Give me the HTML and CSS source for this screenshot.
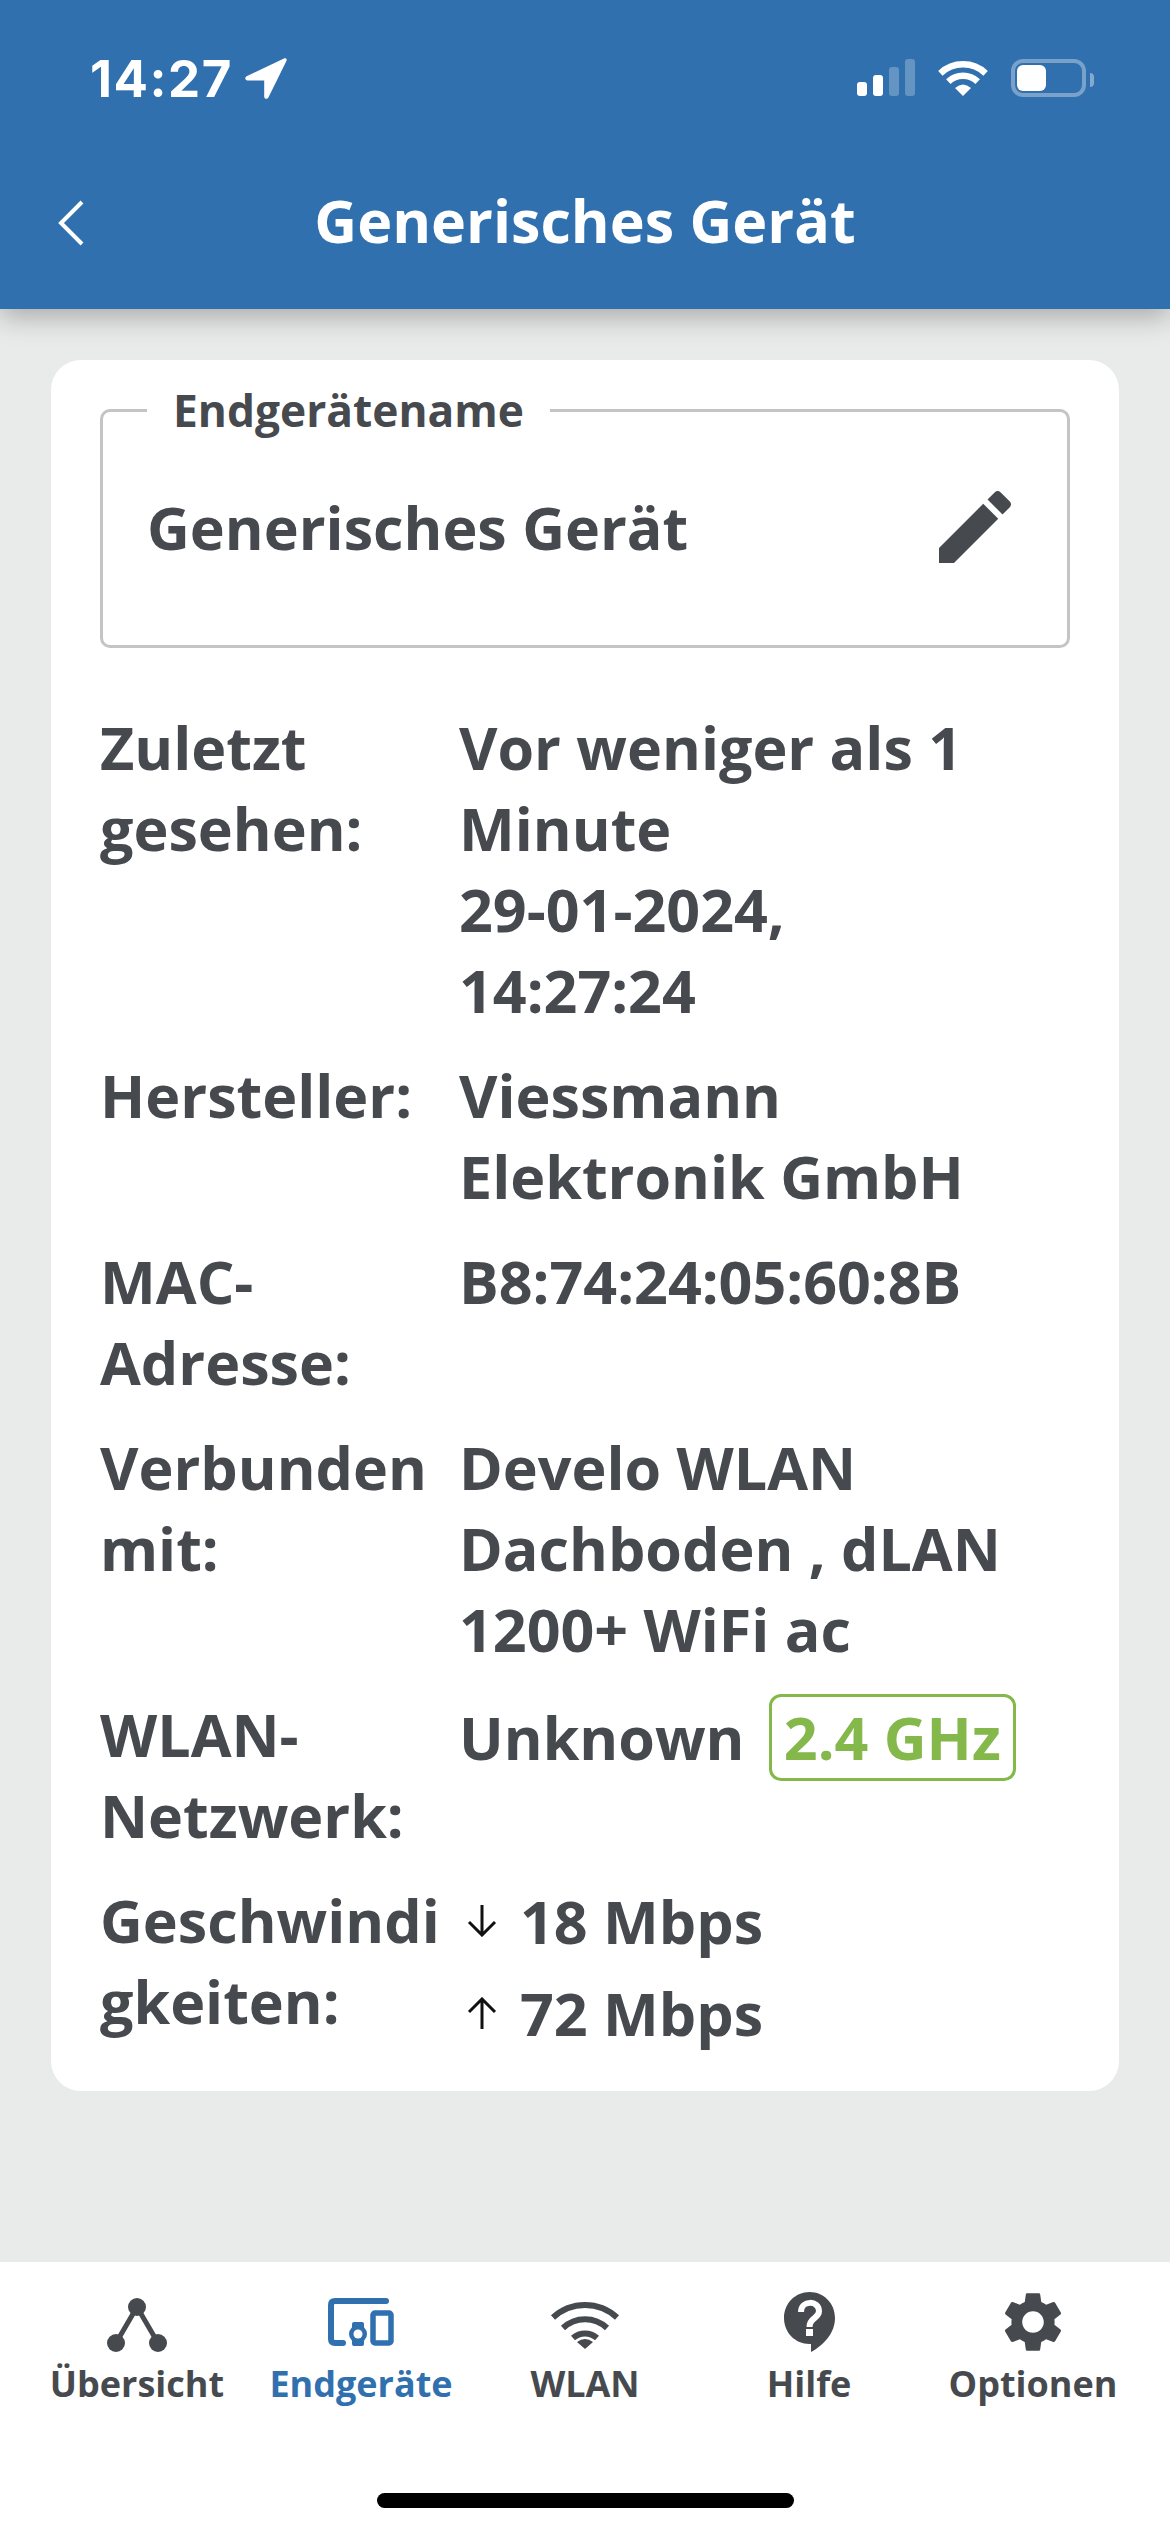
FILE: index.html
```html
<!DOCTYPE html>
<html lang="de">
<head>
  <meta charset="UTF-8">
  <meta name="viewport" content="width=device-width, initial-scale=1.0">
  <title>Generisches Gerät</title>
  <link rel="stylesheet" href="styles.css">
</head>
<body>
  <header class="top">
    <div class="status">
      <div class="clock">
        <span class="time">14:27</span>
        <svg class="locate" width="42" height="41" viewBox="0 0 42 41"><path d="M39 .6 1.600 18.200C-.6 19.300 0 22.400 2.600 22.400H19.200V38.400C19.200 41 22.300 41.600 23.400 39.400L41.400 3C42.300 1.200 40.800-.2 39 .6Z" fill="#fff"/></svg>
      </div>
      <div class="indicators">
        <svg width="58" height="37" viewBox="0 0 58 37">
          <rect x="0" y="23" width="10" height="14" rx="3" fill="#fff"/>
          <rect x="16" y="16" width="10" height="21" rx="3" fill="#fff"/>
          <rect x="32" y="8" width="10" height="29" rx="3" fill="#fff" fill-opacity=".25"/>
          <rect x="48" y="0" width="10" height="37" rx="3" fill="#fff" fill-opacity=".25"/>
        </svg>
        <svg width="50" height="37" viewBox="0 0 50 37">
          <path d="M2.400 14.300A33 33 0 0 1 47.600 14.300" fill="none" stroke="#fff" stroke-width="6.500"/>
          <path d="M10.300 22.600A21.500 21.500 0 0 1 39.700 22.600" fill="none" stroke="#fff" stroke-width="6.500"/>
          <path d="M25 37 17 29Q25 22 33 29Z" fill="#fff"/>
        </svg>
        <div class="battery">
          <div class="battery-fill"></div>
        </div>
      </div>
    </div>
    <div class="nav">
      <svg class="back" width="28" height="46" viewBox="0 0 28 46"><path d="M25 2 4 23 25 44" fill="none" stroke="#fff" stroke-width="4"/></svg>
      <h1>Generisches Gerät</h1>
    </div>
  </header>

  <main class="content">
    <section class="card">
      <fieldset class="name-field">
        <legend>Endgerätename</legend>
        <div class="name-row">
          <span>Generisches Gerät</span>
          <svg width="96" height="96" viewBox="0 0 24 24"><path d="M3 17.250V21h3.750L17.810 9.940l-3.750-3.750L3 17.250zM20.710 7.040c.39-.39.39-1.020 0-1.410l-2.340-2.340c-.39-.39-1.020-.39-1.410 0l-1.830 1.830 3.750 3.750 1.830-1.830z" fill="#464a4e"/></svg>
        </div>
      </fieldset>

      <div class="details">
        <div class="label">Zuletzt gesehen:</div>
        <div class="value">Vor weniger als 1 Minute<br>29-01-2024, 14:27:24</div>

        <div class="label">Hersteller:</div>
        <div class="value">Viessmann Elektronik GmbH</div>

        <div class="label">MAC-Adresse:</div>
        <div class="value">B8:74:24:05:60:8B</div>

        <div class="label">Verbunden mit:</div>
        <div class="value">Develo WLAN Dachboden , dLAN 1200+ WiFi ac</div>

        <div class="label">WLAN-Netzwerk:</div>
        <div class="value network">Unknown <span class="band">2.4 GHz</span></div>

        <div class="label">Geschwindigkeiten:</div>
        <div class="value speeds">
          <div class="speed">
            <svg width="32" height="32" viewBox="0 0 32 32"><path d="M16 0V30M3 17 16 30 29 17" fill="none" stroke="#111" stroke-width="3"/></svg>
            18 Mbps
          </div>
          <div class="speed">
            <svg width="32" height="32" viewBox="0 0 32 32"><path d="M16 32V2M3 15 16 2 29 15" fill="none" stroke="#111" stroke-width="3"/></svg>
            72 Mbps
          </div>
        </div>
      </div>
    </section>
  </main>

  <footer class="tabs">
    <div class="tab-row">
      <div class="tab">
        <svg width="60" height="54" viewBox="0 0 60 54">
          <path d="M9 45 30 9 51 45" fill="none" stroke="#464a4e" stroke-width="5"/>
          <circle cx="30" cy="9" r="9" fill="#464a4e"/>
          <circle cx="9" cy="45" r="9" fill="#464a4e"/>
          <circle cx="51" cy="45" r="9" fill="#464a4e"/>
        </svg>
        <span>Übersicht</span>
      </div>
      <div class="tab active">
        <svg width="66" height="54" viewBox="0 0 66 54">
          <path d="M58 3H7Q3 3 3 7V41Q3 45 7 45H15" fill="none" stroke="#3170ae" stroke-width="6" stroke-linecap="round"/>
          <rect x="45" y="15" width="18" height="30" rx="2" fill="none" stroke="#3170ae" stroke-width="5.500"/>
          <rect x="24" y="24" width="12" height="24" rx="2" fill="#3170ae"/>
          <circle cx="30" cy="36" r="9" fill="#3170ae"/>
          <circle cx="30" cy="36" r="4.500" fill="#fff"/>
        </svg>
        <span>Endgeräte</span>
      </div>
      <div class="tab">
        <svg width="70" height="54" viewBox="0 0 70 54">
          <g fill="none" stroke="#464a4e" stroke-width="6">
            <path d="M3 19.500A47 47 0 0 1 67 19.500"/>
            <path d="M13 30A32 32 0 0 1 57 30"/>
            <path d="M23 40A18 18 0 0 1 47 40"/>
          </g>
          <path d="M35 51 27 44Q35 38 43 44Z" fill="#464a4e"/>
        </svg>
        <span>WLAN</span>
      </div>
      <div class="tab">
        <svg width="51" height="60" viewBox="0 0 51 60">
          <path d="M25.500 0C11.400 0 0 11.400 0 26S11.400 52 25.500 52H27V60C40 53 51 41 51 26S39.600 0 25.500 0Z" fill="#464a4e"/>
          <path d="M17 20C17 8 35 8 35 19 35 27 25.500 25 25.500 35" fill="none" stroke="#fff" stroke-width="6"/>
          <rect x="22" y="37" width="7" height="7" fill="#fff"/>
        </svg>
        <span>Hilfe</span>
      </div>
      <div class="tab">
        <svg width="72" height="60" viewBox="0 2 24 20" preserveAspectRatio="xMidYMid meet"><path d="M19.140 12.940c.04-.3.06-.61.06-.94 0-.32-.02-.64-.07-.94l2.030-1.580c.18-.14.23-.41.12-.61l-1.920-3.320c-.12-.22-.37-.29-.59-.22l-2.390.96c-.5-.38-1.030-.7-1.620-.94l-.36-2.540c-.04-.24-.24-.41-.48-.41h-3.840c-.24 0-.43.17-.47.41l-.36 2.540c-.59.24-1.130.57-1.620.94l-2.390-.96c-.22-.08-.47 0-.59.22L2.740 8.870c-.12.21-.08.47.12.61l2.030 1.580c-.05.3-.09.63-.09.94s.02.64.07.94l-2.030 1.580c-.18.14-.23.41-.12.61l1.920 3.320c.12.22.37.29.59.22l2.390-.96c.5.38 1.030.7 1.620.94l.36 2.540c.05.24.24.41.48.41h3.840c.24 0 .44-.17.47-.41l.36-2.540c.59-.24 1.130-.56 1.620-.94l2.390.96c.22.08.47 0 .59-.22l1.920-3.320c.12-.22.07-.47-.12-.61l-2.010-1.580zM12 15.600c-1.980 0-3.600-1.620-3.600-3.600s1.620-3.600 3.600-3.600 3.600 1.620 3.600 3.600-1.620 3.600-3.600 3.600z" fill="#464a4e"/></svg>
        <span>Optionen</span>
      </div>
    </div>
    <div class="home-bar"></div>
  </footer>
</body>
</html>
```

FILE: styles.css
```css
* {
  box-sizing: border-box;
}
html, body {
  margin: 0;
  height: 2532px;
}
body {
  display: flex;
  flex-direction: column;
  font-family: "Open Sans", sans-serif;
  font-weight: 700;
  background-color: #e9ebea;
  color: #464a4e;
}

.top {
  height: 309px;
  background-color: #3170ae;
  color: #fff;
  box-shadow: 0 8px 26px rgba(0, 0, 0, 0.28);
  position: relative;
  padding: 58px 84px 0 90px;
}
.status {
  display: flex;
  justify-content: space-between;
  align-items: flex-start;
  height: 41px;
}
.clock {
  display: flex;
  align-items: flex-start;
  gap: 12px;
}
.time {
  font-family: Inter, sans-serif;
  font-weight: 700;
  font-size: 51px;
  line-height: 41px;
  letter-spacing: 1.500px;
}
.indicators {
  display: flex;
  align-items: flex-start;
  gap: 23px;
  padding-top: 1px;
}
.battery {
  width: 75px;
  height: 38px;
  border: 4px solid rgba(255, 255, 255, 0.35);
  border-radius: 12px;
  padding: 2px;
  position: relative;
}
.battery::after {
  content: "";
  position: absolute;
  right: -12px;
  top: 10px;
  width: 4px;
  height: 14px;
  background: rgba(255, 255, 255, 0.4);
  border-radius: 0 4px 4px 0;
}
.battery-fill {
  width: 29px;
  height: 100%;
  background: #fff;
  border-radius: 6px;
}
.nav {
  display: flex;
  align-items: center;
  justify-content: center;
  position: relative;
  margin: 81px -84px 0 -90px;
  height: 80px;
}
.back {
  position: absolute;
  left: 57px;
  top: 20px;
}
h1 {
  margin: 0;
  font-size: 59.200px;
  font-weight: 700;
  line-height: 80px;
}

.content {
  flex: 1;
  padding: 51px 51px 0;
}
.card {
  background: #fff;
  border-radius: 30px;
  padding: 23px 49px 0;
  height: 1731px;
}
.name-field {
  margin: 0;
  padding: 0 44px 0;
  height: 265px;
  border: 3px solid #c4c4c4;
  border-radius: 10px;
}
.name-field legend {
  padding: 0 26px;
  font-size: 44.300px;
  line-height: 54px;
}
.name-row {
  display: flex;
  align-items: center;
  justify-content: space-between;
  font-size: 59.200px;
  padding-top: 42px;
}
.details {
  display: grid;
  grid-template-columns: 342px 565px;
  column-gap: 17px;
  row-gap: 24px;
  margin-top: 59px;
  font-size: 59.200px;
  line-height: 81px;
}
.label {
  overflow-wrap: anywhere;
}
.band {
  display: inline-block;
  margin-left: 9px;
  padding: 0 12px;
  height: 87px;
  line-height: 81px;
  border: 3px solid #84b84a;
  border-radius: 12px;
  color: #84b84a;
}
.speeds {
  margin-top: -5px;
}
.speed {
  display: flex;
  align-items: center;
  gap: 22px;
  height: 92px;
  padding-left: 7px;
}

.tabs {
  height: 270px;
  background: #fff;
  position: relative;
}
.tab-row {
  display: grid;
  grid-template-columns: repeat(5, 224px);
  padding: 20px 25px 0;
}
.tab {
  display: flex;
  flex-direction: column;
  align-items: center;
  gap: 7px;
  font-size: 36px;
  line-height: 50px;
  height: 127px;
  justify-content: flex-end;
}
.tab.active {
  color: #3170ae;
}
.home-bar {
  position: absolute;
  left: 377px;
  top: 231px;
  width: 417px;
  height: 15px;
  background: #000;
  border-radius: 8px;
}
```
